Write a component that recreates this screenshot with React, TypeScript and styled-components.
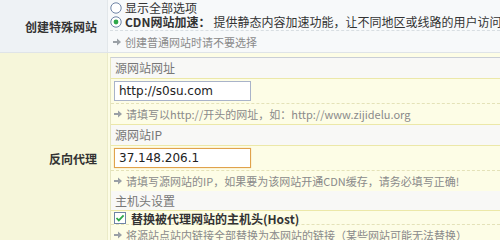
import React from "react";
import styled, { createGlobalStyle } from "styled-components";

const GlobalStyle = createGlobalStyle`
  html, body {
    margin: 0;
    padding: 0;
    background: #fdfde6;
  }
  body {
    font-family: "Noto Sans CJK SC", "DejaVu Sans", sans-serif;
    font-size: 12px;
    color: #333;
    overflow: hidden;
  }
  svg {
    flex-shrink: 0;
  }
`;

const Table = styled.div`
  width: 500px;
  height: 240px;
  overflow: hidden;
`;

const Row = styled.div<{ tone: "grey" | "yellow"; height: number }>`
  display: grid;
  grid-template-columns: 108px 1fr;
  height: ${({ height }) => height}px;
  background: ${({ tone }) => (tone === "grey" ? "#f7f9fa" : "#fdfde6")};
  border-bottom: 1px solid ${({ tone }) => (tone === "grey" ? "#dfe4e8" : "transparent")};
`;

const Label = styled.div<{ tone: "grey" | "yellow"; shift?: number }>`
  display: flex;
  align-items: center;
  justify-content: flex-end;
  padding-right: 10px;
  padding-top: ${({ shift }) => shift ?? 0}px;
  font-weight: bold;
  font-size: 12px;
  color: #333;
  background: ${({ tone }) => (tone === "grey" ? "#eef2f5" : "#f6f6da")};
  border-right: 1px solid ${({ tone }) => (tone === "grey" ? "#e2e7ea" : "#ebebc8")};
`;

const Cell = styled.div`
  min-width: 0;
  padding: 0 0 0 2px;
  white-space: nowrap;
  overflow: hidden;
`;

const OptionList = styled.div`
  display: flex;
  flex-direction: column;
  padding: 1px 0 1px;
  border-bottom: 1px dashed #d8dee2;
`;

const Option = styled.label`
  display: flex;
  align-items: center;
  gap: 3px;
  height: 14px;
  line-height: 14px;
  color: #333;
  white-space: nowrap;
`;

const Strong = styled.b`
  font-weight: bold;
`;

const Hint = styled.div<{ dashed?: boolean }>`
  display: flex;
  align-items: center;
  gap: 4px;
  height: 20px;
  padding-left: 3px;
  color: #8a8a8a;
  font-size: 11px;
  white-space: nowrap;
  border-top: 1px ${({ dashed }) => (dashed ? "dashed #e4e2b8" : "solid transparent")};
`;

const Panel = styled.div`
  margin-top: 4px;
  border-left: 1px solid #e6e6c0;
  border-top: 1px solid #c9ced6;
`;

const PanelHead = styled.div<{ gap?: boolean; compact?: boolean }>`
  height: ${({ compact }) => (compact ? 19 : 20)}px;
  line-height: ${({ compact }) => (compact ? 19 : 20)}px;
  padding-left: 4px;
  background: #f8f8f6;
  color: #777;
  font-size: 12px;
  border-top: ${({ gap }) => (gap ? "1px solid #ece8a8" : "none")};
  border-bottom: 1px solid #ece8a8;
`;

const FieldRow = styled.div`
  display: flex;
  align-items: center;
  height: 24px;
  padding-left: 3px;
`;

const Input = styled.input<{ focused?: boolean }>`
  box-sizing: border-box;
  width: 137px;
  height: 20px;
  padding: 0 4px;
  margin: 0;
  font-family: "DejaVu Sans", "Noto Sans CJK SC", sans-serif;
  font-size: 12px;
  color: #222;
  background: #fff;
  border: 1px solid ${({ focused }) => (focused ? "#e0a24c" : "#a9b3c9")};
  outline: none;
  box-shadow: ${({ focused }) => (focused ? "0 0 1px #f0c080" : "none")};
`;

const CheckRow = styled.div`
  display: flex;
  align-items: center;
  gap: 5px;
  height: 12px;
  padding: 1px 0 0 3px;
  font-weight: bold;
  color: #333;
  white-space: nowrap;
`;

const Arrow = () => (
  <svg width="8" height="8" viewBox="0 0 8 8">
    <path d="M0 3h4V0.5L8 4 4 7.5V5H0z" fill="#9aa0a6" />
  </svg>
);

const Radio = ({ checked }: { checked?: boolean }) => (
  <svg width="12" height="12" viewBox="0 0 12 12">
    <circle cx="6" cy="6" r="5.2" fill="#fff" stroke="#6f84a6" strokeWidth="1" />
    {checked && <circle cx="6" cy="6" r="2.4" fill="#2fa84a" />}
  </svg>
);

const Check = () => (
  <svg width="12" height="12" viewBox="0 0 12 12">
    <rect x="0.5" y="0.5" width="11" height="11" fill="#fff" stroke="#6f84a6" />
    <path d="M2.5 6l2.3 2.4L9.6 3.4" fill="none" stroke="#2fa84a" strokeWidth="1.8" />
  </svg>
);

export default function App() {
  return (
    <>
      <GlobalStyle />
      <Table>
        <Row tone="grey" height={52}>
          <Label tone="grey">创建特殊网站</Label>
          <Cell>
            <OptionList>
              <Option>
                <Radio /> 显示全部选项
              </Option>
              <Option>
                <Radio checked />
                <Strong>CDN网站加速：</Strong>
                提供静态内容加速功能，让不同地区或线路的用户访问不同的服务器，是下载或镜像网站的解决方案
              </Option>
            </OptionList>
            <Hint>
              <Arrow /> 创建普通网站时请不要选择
            </Hint>
          </Cell>
        </Row>
        <Row tone="yellow" height={188}>
          <Label tone="yellow" shift={22}>
            反向代理
          </Label>
          <Cell>
            <Panel>
              <PanelHead>源网站网址</PanelHead>
              <FieldRow>
                <Input defaultValue="http://s0su.com" />
              </FieldRow>
              <Hint dashed>
                <Arrow /> 请填写以http://开头的网址，如：http://www.zijidelu.org
              </Hint>
              <PanelHead gap>源网站IP</PanelHead>
              <FieldRow>
                <Input focused defaultValue="37.148.206.1" />
              </FieldRow>
              <Hint dashed>
                <Arrow /> 请填写源网站的IP，如果要为该网站开通CDN缓存，请务必填写正确!
              </Hint>
              <PanelHead compact>主机头设置</PanelHead>
              <CheckRow>
                <Check /> 替换被代理网站的主机头(Host)
              </CheckRow>
              <Hint dashed>
                <Arrow /> 将源站点站内链接全部替换为本网站的链接（某些网站可能无法替换）
              </Hint>
            </Panel>
          </Cell>
        </Row>
      </Table>
    </>
  );
}
